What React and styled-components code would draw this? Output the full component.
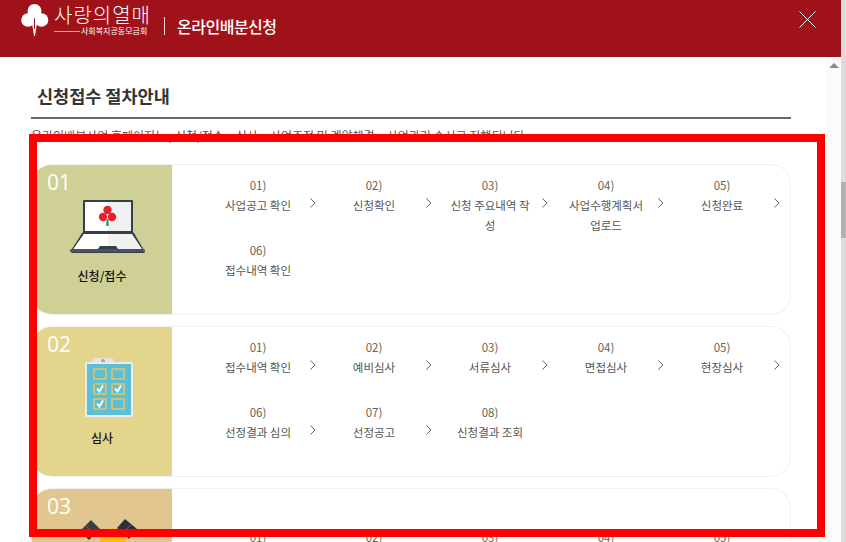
import React from "react";
import styled, { createGlobalStyle } from "styled-components";

const FONT = `"Noto Sans CJK KR", "Noto Sans", sans-serif`;

const GlobalStyle = createGlobalStyle`
  html, body {
    margin: 0;
    padding: 0;
    height: 100%;
    overflow: hidden;
    background: #fff;
    font-family: ${FONT};
  }
`;

const Page = styled.div`
  position: relative;
  display: flex;
  width: 846px;
  height: 542px;
  overflow: hidden;
`;

const Main = styled.div`
  display: flex;
  flex-direction: column;
  width: 841px;
`;

const OuterTrack = styled.div`
  width: 5px;
  background: #dcdcdc;
  padding-top: 182px;
`;

const OuterThumb = styled.div`
  height: 56px;
  background: #b2b2b2;
`;

const Header = styled.header`
  display: flex;
  align-items: flex-start;
  height: 57px;
  flex: none;
  background: #a01219;
  padding: 0 25px 0 21px;
  box-sizing: border-box;
  color: #fff;
`;

const LogoMark = styled.svg`
  margin-top: 3px;
  flex: none;
`;

const LogoText = styled.div`
  display: flex;
  flex-direction: column;
  margin-left: 5px;
  width: 96px;
`;

const LogoName = styled.div`
  font-size: 20px;
  font-weight: 300;
  line-height: 22px;
  letter-spacing: 1px;
  margin-top: 4px;
  white-space: nowrap;
`;

const LogoSub = styled.div`
  display: flex;
  align-items: center;
  font-size: 8px;
  line-height: 10px;
  white-space: nowrap;

  &::before {
    content: "";
    width: 26px;
    height: 1px;
    margin-right: 1px;
    background: #d9a0a3;
  }
`;

const Divider = styled.div`
  width: 1px;
  height: 18px;
  margin: 17px 12px 0 14px;
  background: #f3dcdc;
`;

const ServiceName = styled.div`
  font-size: 16px;
  font-weight: 500;
  line-height: 22px;
  margin-top: 15px;
  letter-spacing: -0.5px;
`;

const CloseIcon = styled.svg`
  margin: 11px 0 0 auto;
`;

const Body = styled.div`
  display: flex;
  flex: 1;
  min-height: 0;
`;

const Content = styled.main`
  width: 826px;
  padding-left: 31px;
  box-sizing: border-box;
  overflow: hidden;
`;

const Column = styled.div`
  width: 760px;
  padding-top: 26px;
`;

const Title = styled.h2`
  margin: 0;
  height: 34px;
  padding-left: 6px;
  border-bottom: 2px solid #666;
  font-size: 17.5px;
  font-weight: 700;
  line-height: 26px;
  color: #333;
`;

const Description = styled.p`
  margin: 8px 0 19px;
  font-size: 12px;
  line-height: 18px;
  color: #555;
  white-space: nowrap;
`;

const InnerTrack = styled.div`
  width: 15px;
  background: #fbfbfb;
  display: flex;
  justify-content: center;
  padding-top: 6px;
  box-sizing: border-box;
`;

const ArrowUp = styled.div`
  width: 0;
  height: 0;
  border-left: 5px solid transparent;
  border-right: 5px solid transparent;
  border-bottom: 5px solid #8a8a8a;
`;

const Card = styled.section`
  display: flex;
  height: 151px;
  margin-bottom: 11px;
  border: 1px solid #f1f1f1;
  border-left: 0;
  border-radius: 20px;
  box-sizing: border-box;
  overflow: hidden;
  margin-left: 1px;
`;

const Side = styled.div`
  display: flex;
  flex-direction: column;
  flex: none;
  width: 140px;
  background: ${(p) => p.$color};
`;

const Num = styled.div`
  height: 35px;
  padding-left: 15px;
  font-family: "Open Sans", sans-serif;
  font-size: 21px;
  line-height: 35px;
  color: #fff;
`;

const SideIcon = styled.svg`
  display: block;
  margin: -5px auto 0;
`;

const SideTitle = styled.div`
  margin-top: 10px;
  text-align: center;
  font-size: 12px;
  font-weight: 500;
  line-height: 18px;
  color: #111;
`;

const Steps = styled.ol`
  display: grid;
  grid-template-columns: repeat(5, 116px);
  grid-auto-rows: 65px;
  margin: 0;
  padding: ${(p) => p.$top}px 0 0 28px;
  list-style: none;
`;

const Step = styled.li`
  position: relative;
  text-align: center;
  font-size: 11.5px;
  line-height: 20px;
  color: #555;
`;

const StepNo = styled.div`
  color: #6b5f55;
`;

const StepName = styled.div`
  padding: 0 15px;
`;

const Chevron = styled.svg`
  position: absolute;
  top: 23px;
  right: 0;
`;

const Highlight = styled.div`
  position: absolute;
  left: 29px;
  top: 134px;
  width: 796px;
  height: 403px;
  border: 8px solid #f00;
  box-sizing: border-box;
  pointer-events: none;
`;

const LaptopIcon = () => (
  <SideIcon width="100" height="62" viewBox="0 0 100 62">
    <path d="M19 58 L30 38 H82 L93 58 Z" fill="#333f4b" transform="translate(0 0)" />
    <path d="M18.5 56 L31 37 V6 Q31 5 32 5 H80 Q81 5 81 6 V37 L92.5 56 Z" fill="#333f4b" />
    <rect x="33" y="7" width="46" height="29" fill="#f1f1f1" />
    <rect x="33" y="7" width="23" height="29" fill="#fff" />
    <path d="M21.5 54 L32 39 H80 L90 54 Z" fill="#f1f1f1" />
    <path d="M21.5 54 L32 39 H56 V54 Z" fill="#fff" />
    <rect x="18" y="54" width="75" height="3" rx="1.5" fill="#4a545e" />
    <path d="M46 54 L48 51 H64 L66 54 Z" fill="#333f4b" />
    <circle cx="55.5" cy="15" r="4.2" fill="#e8202a" />
    <circle cx="51" cy="22" r="4.2" fill="#e8202a" />
    <circle cx="60" cy="22" r="4.2" fill="#e8202a" />
    <path d="M54.5 24 H56.5 L56.8 31 H54.2 Z" fill="#2f9e5b" />
  </SideIcon>
);

const Check = ({ x, y, on }) => (
  <g>
    <rect x={x} y={y} width="12" height="10" fill="none" stroke="#f4c15d" strokeWidth="1.4" />
    {on && <path d={`M${x + 3} ${y + 4.5} l2.4 3 l3.6 -6`} fill="none" stroke="#fff" strokeWidth="2" />}
  </g>
);

const BoardIcon = () => (
  <SideIcon width="100" height="62" viewBox="0 0 100 62">
    <path d="M40 6 Q40 1 43 1 H59 Q62 1 62 6 Z" fill="#e4e4e4" />
    <circle cx="51" cy="4" r="2" fill="#b3a95f" />
    <rect x="33" y="5" width="48" height="55" rx="1.5" fill="#ebebeb" />
    <rect x="35" y="7" width="44" height="51" fill="#5bbfd5" />
    <Check x={42} y={12} />
    <Check x={60} y={12} />
    <Check x={42} y={27} on />
    <Check x={60} y={27} on />
    <Check x={42} y={42} on />
    <Check x={60} y={42} />
  </SideIcon>
);

const DealIcon = () => (
  <SideIcon width="100" height="62" viewBox="0 0 100 62">
    <circle cx="61" cy="22" r="13" fill="#fdb913" />
    <path d="M28 12 L39 1 L48 10 L37 21 Z" fill="#333f4b" />
    <path d="M34 7 L43 16" stroke="#e8313a" strokeWidth="1" />
    <path d="M65 9 L73 0 L85 10 L77 20 Z" fill="#29323c" />
    <path d="M69 15 L80 5" stroke="#e8313a" strokeWidth="1" />
  </SideIcon>
);

const STAGES = [
  {
    no: "01",
    title: "신청/접수",
    color: "#cfd096",
    icon: <LaptopIcon />,
    top: 10,
    steps: ["사업공고 확인", "신청확인", "신청 주요내역 작성", "사업수행계획서 업로드", "신청완료", "접수내역 확인"],
  },
  {
    no: "02",
    title: "심사",
    color: "#e3d58b",
    icon: <BoardIcon />,
    top: 10,
    steps: ["접수내역 확인", "예비심사", "서류심사", "면접심사", "현장심사", "선정결과 심의", "선정공고", "신청결과 조회"],
  },
  {
    no: "03",
    title: "",
    color: "#e1c68f",
    icon: <DealIcon />,
    top: 38,
    steps: ["", "", "", "", ""],
  },
];

const pad = (n) => String(n).padStart(2, "0");

const Stage = ({ stage }) => (
  <Card>
    <Side $color={stage.color}>
      <Num>{stage.no}</Num>
      {stage.icon}
      <SideTitle>{stage.title}</SideTitle>
    </Side>
    <Steps $top={stage.top}>
      {stage.steps.map((name, i) => (
        <Step key={i}>
          <StepNo>{pad(i + 1)})</StepNo>
          <StepName>{name}</StepName>
          {i < stage.steps.length - 1 && (
            <Chevron width="6" height="10" viewBox="0 0 6 10">
              <path d="M0.5 0.5 L5 5 L0.5 9.5" fill="none" stroke="#555" strokeWidth="0.9" />
            </Chevron>
          )}
        </Step>
      ))}
    </Steps>
  </Card>
);

export default function App() {
  return (
    <Page>
      <GlobalStyle />
      <Main>
        <Header>
          <LogoMark width="28" height="34" viewBox="0 0 28 34">
            <circle cx="13.5" cy="8" r="7" fill="#fff" />
            <circle cx="7" cy="17" r="6.8" fill="#fff" />
            <circle cx="20.5" cy="17" r="6.8" fill="#fff" />
            <path d="M11 20 H16 L14 33 H13 Z" fill="#fff" />
            <path d="M13.5 16 V26" stroke="#a01219" strokeWidth="1" />
          </LogoMark>
          <LogoText>
            <LogoName>사랑의열매</LogoName>
            <LogoSub>사회복지공동모금회</LogoSub>
          </LogoText>
          <Divider />
          <ServiceName>온라인배분신청</ServiceName>
          <CloseIcon width="17" height="17" viewBox="0 0 17 17">
            <path d="M0.5 0.5 L16.5 16.5 M16.5 0.5 L0.5 16.5" stroke="#fff" strokeWidth="1" />
          </CloseIcon>
        </Header>
        <Body>
          <Content>
            <Column>
              <Title>신청접수 절차안내</Title>
              <Description>
                온라인배분사업 홈페이지는 , 신청/접수 &gt; 심사 &gt; 사업조정 및 계약체결 &gt; 사업관리 순서로 진행됩니다
              </Description>
              {STAGES.map((s) => (
                <Stage key={s.no} stage={s} />
              ))}
            </Column>
          </Content>
          <InnerTrack>
            <ArrowUp />
          </InnerTrack>
        </Body>
      </Main>
      <OuterTrack>
        <OuterThumb />
      </OuterTrack>
      <Highlight />
    </Page>
  );
}
